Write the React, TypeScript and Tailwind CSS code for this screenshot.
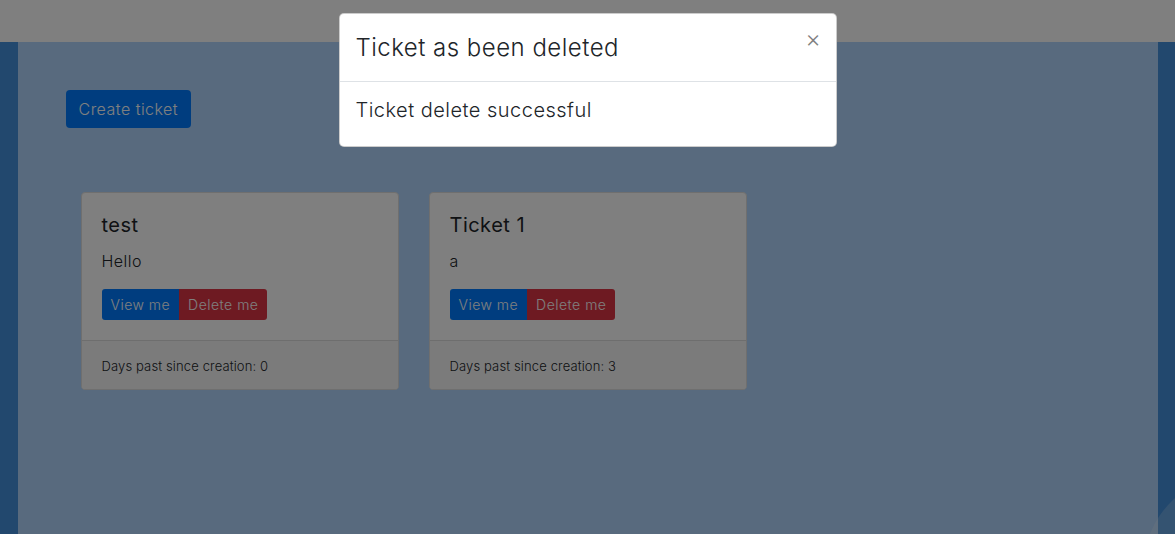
import React from 'react';

type Ticket = { title: string; text: string; days: number };

const tickets: Ticket[] = [
  { title: 'test', text: 'Hello', days: 0 },
  { title: 'Ticket 1', text: 'a', days: 3 },
];

const TicketCard: React.FC<{ ticket: Ticket }> = ({ ticket }) => (
  <div className="w-[318px] bg-white border border-[#dfdfdf] rounded-[4px] flex flex-col">
    <div className="p-5">
      <h5 className="text-[20px] leading-[24px] font-normal text-[#212529] mb-3">{ticket.title}</h5>
      <p className="text-[16px] leading-[24px] text-[#212529] mb-4">{ticket.text}</p>
      <div className="flex">
        <button className="h-[31px] px-[9px] text-[14px] text-white bg-[#007bff] rounded-l-[3px]">View me</button>
        <button className="h-[31px] px-[9px] text-[14px] text-white bg-[#dc3545] rounded-r-[3px]">Delete me</button>
      </div>
    </div>
    <div className="border-t border-[#dcdcdc] bg-[#f7f7f7] px-5 pt-[13px] pb-[11px] rounded-b-[3px]">
      <small className="block text-[13px] leading-[24px] tracking-[0.01em] text-[#212529]">Days past since creation: {ticket.days}</small>
    </div>
  </div>
);

export default function App() {
  return (
    <div
      className="relative h-[534px] overflow-hidden bg-[#4490dc] font-light tracking-[0.03em]"
      style={{ fontFamily: 'Inter, "Noto Sans", sans-serif' }}
    >
      <nav className="h-[42px] bg-white" />
      <div className="mx-auto w-[1140px] h-[492px] bg-[#b0d4fc] px-12 pt-12">
        <button className="h-[38px] px-[13px] text-[16px] text-white bg-[#007bff] rounded-[4px]">Create ticket</button>
        <div className="flex gap-[30px] mt-16 ml-[15px]">
          {tickets.map(t => <TicketCard key={t.title} ticket={t} />)}
        </div>
      </div>

      <div className="absolute right-[-162px] bottom-[-133px] w-[194px] h-[194px] rounded-full bg-white/20" />

      {/* modal backdrop */}
      <div className="absolute inset-0 bg-black/50" />

      <div className="absolute top-[13px] left-1/2 -translate-x-1/2 w-[498px] bg-white border border-black/20 rounded-[5px]">
        <div className="flex items-start justify-between px-4 py-4 border-b border-[#dee2e6]">
          <h3 className="text-[24px] leading-[35px] text-[#212529]">Ticket as been deleted</h3>
          <button className="text-[24px] leading-[24px] text-black/50 -mt-[3px] -mr-[2px] font-light">×</button>
        </div>
        <div className="px-4 pt-[13px] pb-[21px]">
          <p className="text-[20px] leading-[30px] text-[#212529]">Ticket delete successful</p>
        </div>
      </div>
    </div>
  );
}
